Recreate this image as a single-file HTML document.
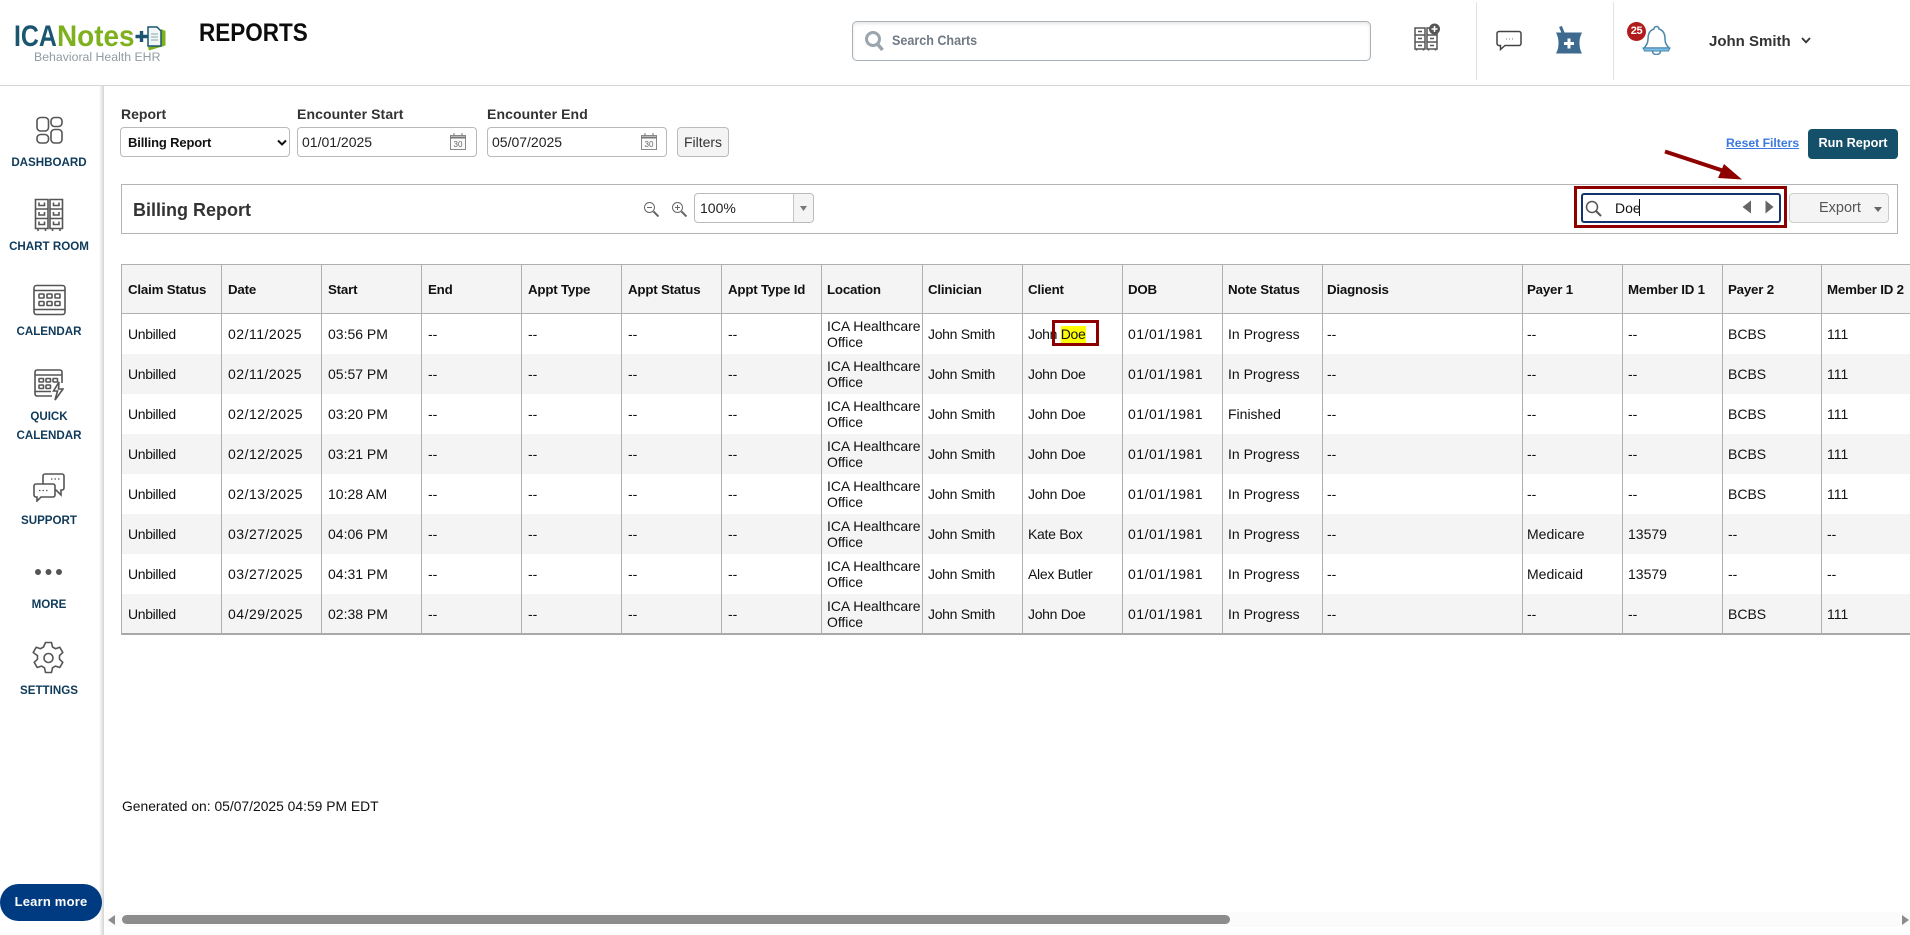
<!DOCTYPE html>
<html lang="en"><head><meta charset="utf-8"><title>Reports</title>
<style>
*{box-sizing:border-box}
html,body{margin:0;padding:0;width:1910px;height:935px;overflow:hidden;background:#fff;font-family:"Liberation Sans",Arial,sans-serif;color:#111}
.a{position:absolute}
.nav{position:absolute;left:0;width:98px;text-align:center;font-size:11.6px;font-weight:700;color:#0f3a5a;line-height:18px;white-space:nowrap}
.lbl{position:absolute;top:105px;font-size:14px;font-weight:700;color:#333;line-height:18px;white-space:nowrap}
.inp{position:absolute;top:127px;height:30px;border:1px solid #b9b9b9;border-radius:4px;background:#fff;font-size:14px;line-height:28px;color:#222}
#wrap{position:absolute;left:121px;top:264px;width:1789px;height:372px;overflow:hidden}
table{position:absolute;left:0;top:0;border-collapse:separate;border-spacing:0;table-layout:fixed;width:1801px;border-top:1px solid #b0b0b0;border-left:1px solid #b0b0b0}
th,td{border-right:1px solid #b0b0b0;padding:0 0 0 6px;overflow:hidden;white-space:nowrap;text-align:left;font-weight:400}
th{height:49px;background:#f4f4f4;font-weight:700;font-size:13.3px;letter-spacing:-.2px;color:#111;border-bottom:1px solid #b0b0b0}
td{height:40px;font-size:14px;color:#111;line-height:16px}
th:nth-child(n+8),td:nth-child(n+8){padding-left:5px}
th:nth-child(13),td:nth-child(13),th:nth-child(14),td:nth-child(14){padding-left:4px}
td.w{letter-spacing:-.05px}
td:nth-child(1){letter-spacing:-.35px}
td:nth-child(2),td:nth-child(11){letter-spacing:.5px}
td:nth-child(9),td:nth-child(10){letter-spacing:-.3px}
tr:nth-child(even) td{background:#f4f4f4}
tbody tr:last-child td{height:41px;border-bottom:2px solid #a8a8a8}
mark{background:#ff0;color:#111;display:inline-block;line-height:17px}
</style></head><body>

<!-- header -->
<div class="a" style="left:0;top:85px;width:1910px;height:1px;background:#d6d6d6"></div>
<div class="a" style="left:14px;top:20px;font-size:30px;font-weight:700;color:#1b5670;line-height:34px;transform:scaleX(.83);transform-origin:left">ICA</div>
<div class="a" style="left:57px;top:20px;font-size:30px;font-weight:700;color:#7fb11f;line-height:34px;transform:scaleX(.93);transform-origin:left">Notes</div>
<svg class="a" style="left:134px;top:24px" width="34" height="28" viewBox="0 0 34 28"><path d="M1.500 12.500h12M7.500 7v11" stroke="#1b5670" stroke-width="3.400" fill="none"/><path d="M15 26.500L31.500 21.500V7L27 5v16L14 23z" fill="#7fb11f"/><path d="M14 3h9l4 4v15H14z" fill="#f2f6f7" stroke="#1b5670" stroke-width="1.500"/><path d="M17 10h7M17 13h7M17 16h7" stroke="#8aa" stroke-width="1"/></svg>
<div class="a" style="left:34px;top:49px;font-size:12.300px;color:#8f9ca2;line-height:16px;white-space:nowrap">Behavioral Health EHR</div>
<div class="a" style="left:199px;top:18px;font-size:25px;font-weight:700;color:#0c0c0c;line-height:30px;transform:scaleX(.9);transform-origin:left">REPORTS</div>

<div class="a" style="left:852px;top:21px;width:519px;height:40px;border:1.500px solid #a9b1b8;border-radius:5px;box-shadow:inset 0 2px 3px #e8e8e8"></div>
<svg class="a" style="left:864px;top:30px" width="21" height="22" viewBox="0 0 21 22"><circle cx="9" cy="9" r="6.500" fill="none" stroke="#9aa5ae" stroke-width="3"/><path d="M13.500 14l5 6" stroke="#9aa5ae" stroke-width="3.400"/></svg>
<div class="a" style="left:892px;top:32px;font-size:13.500px;font-weight:700;color:#6f7a84;line-height:18px;transform:scaleX(.93);transform-origin:left;white-space:nowrap">Search Charts</div>

<svg class="a" style="left:1414px;top:23px" width="27" height="28" viewBox="0 0 27 28" fill="none" stroke="#555" stroke-width="1.500"><path d="M1 5h10v21H1zM13 5h10v21H13zM1 12h10M1 19h10M13 12h10M13 19h10M4 8.500h4M4 15.500h4M4 22.500h4M16 8.500h4M16 15.500h4M16 22.500h4M2.500 26v1.500M9.500 26v1.500M14.500 26v1.500M21.500 26v1.500"/><circle cx="20.500" cy="6" r="5.500" fill="#555" stroke="none"/><path d="M20.500 3v6M17.500 6h6" stroke="#fff" stroke-width="1.600"/></svg>
<div class="a" style="left:1476px;top:2px;width:1px;height:78px;background:#e2e2e2"></div>
<svg class="a" style="left:1496px;top:30px" width="26" height="21" viewBox="0 0 26 21" fill="none"><path d="M3 1.500h20a2 2 0 0 1 2 2v10a2 2 0 0 1-2 2H9l-4.500 4V15.500H3a2 2 0 0 1-2-2v-10a2 2 0 0 1 2-2z" stroke="#444" stroke-width="1.500"/><path d="M10 9h1M13 9h1M16 9h1" stroke="#777" stroke-width="1"/></svg>
<svg class="a" style="left:1556px;top:26px" width="26" height="28" viewBox="0 0 26 28"><path d="M4.500 .5L7.500 8" stroke="#3e6a8f" stroke-width="3"/><path d="M0 6.500H26C24 11 23.500 13 23.500 17c0 4 .7 7 2.500 10.500H0C1.800 24 2.500 21 2.500 17 2.500 13 2 11 0 6.500z" fill="#3e6a8f"/><path d="M13 12.500v10M8 17.500h10" stroke="#fff" stroke-width="3"/></svg>
<div class="a" style="left:1613px;top:2px;width:1px;height:78px;background:#e2e2e2"></div>
<svg class="a" style="left:1642px;top:25px" width="29" height="30" viewBox="0 0 29 30" fill="none"><path d="M14.500 1.500c-1.500 0-2.500 1-2.500 2.500C7 5.500 6 10 6 14c0 4-1.500 6-4 9h25c-2.500-3-4-5-4-9 0-4-1-8.500-6-10 0-1.500-1-2.500-2.500-2.500z" stroke="#4a86ab" stroke-width="1.500" fill="#fff"/><path d="M1 23h27l-1.500 3H2.500z" fill="#7cc0e8" stroke="#4a86ab" stroke-width="1"/><path d="M10.500 26c0 2.500 2 3.500 4 3.500s4-1 4-3.500" stroke="#4a86ab" stroke-width="1.500"/></svg>
<div class="a" style="left:1627px;top:22px;width:19px;height:19px;border-radius:50%;background:#b01c1c;color:#fff;font-size:11px;font-weight:700;line-height:19px;text-align:center;letter-spacing:-.4px">25</div>
<div class="a" style="left:1709px;top:32px;font-size:15px;font-weight:700;color:#333;line-height:20px;white-space:nowrap">John Smith</div>
<svg class="a" style="left:1801px;top:37px" width="10" height="7" viewBox="0 0 10 7"><path d="M1 1l4 4.300L9 1" stroke="#333" stroke-width="1.800" fill="none"/></svg>

<!-- sidebar -->
<div class="a" style="left:99px;top:86px;width:5px;height:849px;background:linear-gradient(90deg,#fff,#d4d4d4)"></div>

<svg class="a" style="left:36px;top:116px" width="27" height="28" viewBox="0 0 27 28" fill="none" stroke="#555" stroke-width="1.600"><rect x="1" y="1.500" width="11.500" height="13.500" rx="3.500"/><rect x="15" y="1.500" width="11" height="9" rx="3.500"/><rect x="1" y="18.500" width="11.500" height="8.500" rx="3.500"/><rect x="15" y="13.500" width="11" height="13.500" rx="3.500"/></svg>
<div class="nav" style="top:154px">DASHBOARD</div>

<svg class="a" style="left:34px;top:198px" width="30" height="34" viewBox="0 0 30 34" fill="none" stroke="#555" stroke-width="1.600"><path d="M1.500 1.500h12.500v29H1.500zM16 1.500h12.500v29H16zM1.500 11h12.500M1.500 20.500h12.500M16 11h12.500M16 20.500h12.500M5 4.500v3h5.500v-3M5 14v3h5.500v-3M5 23.500v3h5.500v-3M19.500 4.500v3h5.500v-3M19.500 14v3h5.500v-3M19.500 23.500v3h5.500v-3M4 30.500v2.500M11.500 30.500v2.500M18.500 30.500v2.500M26 30.500v2.500"/></svg>
<div class="nav" style="top:238px">CHART ROOM</div>

<svg class="a" style="left:33px;top:284px" width="33" height="32" viewBox="0 0 33 32" fill="none" stroke="#555" stroke-width="1.600"><rect x="1" y="1.500" width="31" height="29" rx="2.500"/><path d="M1 6.500h31M1 25.500h31"/><rect x="6" y="10" width="5" height="4" rx=".8"/><rect x="14" y="10" width="5" height="4" rx=".8"/><rect x="22" y="10" width="5" height="4" rx=".8"/><rect x="6" y="17.500" width="5" height="4" rx=".8"/><rect x="14" y="17.500" width="5" height="4" rx=".8"/><rect x="22" y="17.500" width="5" height="4" rx=".8"/></svg>
<div class="nav" style="top:323px">CALENDAR</div>

<svg class="a" style="left:34px;top:369px" width="30" height="32" viewBox="0 0 30 32" fill="none" stroke="#555" stroke-width="1.600"><path d="M18 27H3a2 2 0 0 1-2-2V3a2 2 0 0 1 2-2h23a2 2 0 0 1 2 2v11M1 6h27M1 22.500h16"/><rect x="5" y="9.500" width="4.500" height="3.500" rx=".7"/><rect x="12" y="9.500" width="4.500" height="3.500" rx=".7"/><rect x="19" y="9.500" width="4.500" height="3.500" rx=".7"/><rect x="5" y="16" width="4.500" height="3.500" rx=".7"/><rect x="12" y="16" width="4.500" height="3.500" rx=".7"/><path d="M25 13l-5.500 9h4L21 31l8-11h-4.500z"/></svg>
<div class="nav" style="top:408px;line-height:18.500px">QUICK<br>CALENDAR</div>

<svg class="a" style="left:33px;top:473px" width="32" height="29" viewBox="0 0 32 29" fill="none" stroke="#555" stroke-width="1.600"><path d="M10 11V3a2 2 0 0 1 2-2h17a2 2 0 0 1 2 2v12a2 2 0 0 1-2 2h-1v5l-5-5h-2"/><path d="M3 11h17a2 2 0 0 1 2 2v9a2 2 0 0 1-2 2H8l-4 4v-4H3a2 2 0 0 1-2-2v-9a2 2 0 0 1 2-2z" fill="#fff"/><path d="M18 6h1.500M21.500 6H23M25 6h1.500M6 17.500h1.500M9.500 17.500H11M13 17.500h1.500" stroke-width="1.200"/></svg>
<div class="nav" style="top:512px">SUPPORT</div>

<svg class="a" style="left:34px;top:566px" width="30" height="12" viewBox="0 0 30 12" fill="#555"><circle cx="4" cy="6" r="3"/><circle cx="14.500" cy="6" r="3"/><circle cx="25" cy="6" r="3"/></svg>
<div class="nav" style="top:596px">MORE</div>

<svg class="a" style="left:32px;top:641px" width="33" height="34" viewBox="0 0 33 34" fill="none" stroke="#555" stroke-width="1.600"><path d="M13.500 1.500h6l1 4.500 3 1.700 4.300-1.400 3 5.200-3.300 3.100v3.600l3.300 3.100-3 5.200-4.300-1.400-3 1.700-1 4.700h-6l-1-4.700-3-1.700-4.300 1.400-3-5.200 3.300-3.100v-3.600L1.200 11.500l3-5.200 4.300 1.400 3-1.700z" stroke-linejoin="round"/><circle cx="16.500" cy="17" r="4.500"/></svg>
<div class="nav" style="top:682px">SETTINGS</div>

<div class="a" style="left:0;top:884px;width:102px;height:37px;border-radius:18.500px;background:#003a80;color:#fff;font-size:13px;font-weight:700;line-height:36px;text-align:center;letter-spacing:.2px">Learn more</div>

<!-- filters -->
<div class="lbl" style="left:121px">Report</div>
<div class="lbl" style="left:297px;letter-spacing:.1px">Encounter Start</div>
<div class="lbl" style="left:487px;letter-spacing:.1px">Encounter End</div>
<div class="inp" style="left:120px;width:170px;font-weight:700;padding-left:7px;font-size:13px;letter-spacing:-.15px;color:#111;line-height:29px">Billing Report</div>
<svg class="a" style="left:277px;top:139px" width="10" height="8" viewBox="0 0 10 8"><path d="M1 1.500l4 4 4-4" stroke="#111" stroke-width="2" fill="none"/></svg>
<div class="inp" style="left:297px;width:180px;padding-left:4px">01/01/2025</div>
<div class="inp" style="left:487px;width:180px;padding-left:4px">05/07/2025</div>
<svg class="a" style="left:450px;top:133px" width="16" height="17" viewBox="0 0 16 17"><rect x=".5" y="2.500" width="15" height="14" fill="#fafafa" stroke="#888"/><path d="M0 4.500h16" stroke="#777" stroke-width="2"/><path d="M4 0v3M12 0v3" stroke="#777"/><text x="8" y="14" font-size="8" text-anchor="middle" fill="#666" font-family="Liberation Sans,sans-serif">30</text></svg>
<svg class="a" style="left:641px;top:133px" width="16" height="17" viewBox="0 0 16 17"><rect x=".5" y="2.500" width="15" height="14" fill="#fafafa" stroke="#888"/><path d="M0 4.500h16" stroke="#777" stroke-width="2"/><path d="M4 0v3M12 0v3" stroke="#777"/><text x="8" y="14" font-size="8" text-anchor="middle" fill="#666" font-family="Liberation Sans,sans-serif">30</text></svg>
<div class="inp" style="left:677px;width:52px;background:#f4f4f4;text-align:center;color:#333;border-color:#bbb">Filters</div>

<div class="a" style="left:1726px;top:134px;font-size:12.200px;font-weight:700;color:#3b78e0;text-decoration:underline;line-height:18px;white-space:nowrap">Reset Filters</div>
<div class="a" style="left:1808px;top:129px;width:90px;height:30px;background:#14506a;border-radius:4px;color:#fff;font-size:12.700px;font-weight:700;line-height:29px;text-align:center">Run Report</div>

<!-- toolbar -->
<div class="a" style="left:121px;top:184px;width:1777px;height:50px;border:1.500px solid #b4b4b4"></div>
<div class="a" style="left:133px;top:199px;font-size:18px;font-weight:700;color:#333;line-height:22px;white-space:nowrap">Billing Report</div>
<svg class="a" style="left:643px;top:201px" width="16" height="16" viewBox="0 0 16 16" fill="none" stroke="#666"><circle cx="6.500" cy="6.500" r="5"/><path d="M10.500 10.500l5 5" stroke-width="2"/><path d="M4 6.500h5"/></svg>
<svg class="a" style="left:671px;top:201px" width="16" height="16" viewBox="0 0 16 16" fill="none" stroke="#666"><circle cx="6.500" cy="6.500" r="5"/><path d="M10.500 10.500l5 5" stroke-width="2"/><path d="M4 6.500h5M6.500 4v5"/></svg>
<div class="inp" style="left:694px;top:193px;width:120px;padding-left:5px;border-color:#bbb">100%</div>
<div class="a" style="left:793px;top:194px;width:20px;height:28px;background:#f4f4f4;border-left:1px solid #c4c4c4;border-radius:0 3px 3px 0"></div>
<svg class="a" style="left:800px;top:206px" width="7" height="5" viewBox="0 0 7 5"><path d="M0 0h7L3.500 5z" fill="#777"/></svg>

<div class="a" style="left:1574px;top:186px;width:213px;height:42px;border:3px solid #8e0000;background:#fff"></div>
<div class="a" style="left:1581px;top:193px;width:200px;height:30px;border:2px solid #14346e;border-radius:3px;background:#fff"></div>
<svg class="a" style="left:1585px;top:200px" width="17" height="17" viewBox="0 0 17 17" fill="none" stroke="#555"><circle cx="7" cy="7" r="5.500" stroke-width="1.500"/><path d="M11 11l5 5" stroke-width="2"/></svg>
<div class="a" style="left:1615px;top:199px;font-size:14px;color:#111;line-height:18px">Doe</div>
<div class="a" style="left:1639px;top:199px;width:1px;height:17px;background:#111"></div>
<svg class="a" style="left:1742px;top:200px" width="32" height="14" viewBox="0 0 32 14" fill="#666"><path d="M9 .5v13L.5 7zM23.500 .5v13L31.500 7z"/></svg>
<div class="a" style="left:1789px;top:193px;width:100px;height:30px;background:#f4f4f4;border:1px solid #ccc;border-radius:4px;color:#555;font-size:14.500px;line-height:28px;padding-left:29px">Export</div>
<svg class="a" style="left:1874px;top:207px" width="8" height="5" viewBox="0 0 8 5"><path d="M0 0h8L4 5z" fill="#666"/></svg>

<!-- table -->
<div id="wrap"><table>
<colgroup><col style="width:100px"><col style="width:100px"><col style="width:100px"><col style="width:100px"><col style="width:100px"><col style="width:100px"><col style="width:100px"><col style="width:101px"><col style="width:100px"><col style="width:100px"><col style="width:100px"><col style="width:100px"><col style="width:200px"><col style="width:100px"><col style="width:100px"><col style="width:99px"><col style="width:100px"></colgroup>
<thead><tr><th>Claim Status</th><th>Date</th><th>Start</th><th>End</th><th>Appt Type</th><th>Appt Status</th><th>Appt Type Id</th><th>Location</th><th>Clinician</th><th>Client</th><th>DOB</th><th>Note Status</th><th>Diagnosis</th><th>Payer 1</th><th>Member ID 1</th><th>Payer 2</th><th>Member ID 2</th></tr></thead>
<tbody>
<tr><td>Unbilled</td><td>02/11/2025</td><td>03:56 PM</td><td>--</td><td>--</td><td>--</td><td>--</td><td class="w">ICA Healthcare<br>Office</td><td>John Smith</td><td>John <mark>Doe</mark></td><td>01/01/1981</td><td>In Progress</td><td>--</td><td>--</td><td>--</td><td>BCBS</td><td>111</td></tr>
<tr><td>Unbilled</td><td>02/11/2025</td><td>05:57 PM</td><td>--</td><td>--</td><td>--</td><td>--</td><td class="w">ICA Healthcare<br>Office</td><td>John Smith</td><td>John Doe</td><td>01/01/1981</td><td>In Progress</td><td>--</td><td>--</td><td>--</td><td>BCBS</td><td>111</td></tr>
<tr><td>Unbilled</td><td>02/12/2025</td><td>03:20 PM</td><td>--</td><td>--</td><td>--</td><td>--</td><td class="w">ICA Healthcare<br>Office</td><td>John Smith</td><td>John Doe</td><td>01/01/1981</td><td>Finished</td><td>--</td><td>--</td><td>--</td><td>BCBS</td><td>111</td></tr>
<tr><td>Unbilled</td><td>02/12/2025</td><td>03:21 PM</td><td>--</td><td>--</td><td>--</td><td>--</td><td class="w">ICA Healthcare<br>Office</td><td>John Smith</td><td>John Doe</td><td>01/01/1981</td><td>In Progress</td><td>--</td><td>--</td><td>--</td><td>BCBS</td><td>111</td></tr>
<tr><td>Unbilled</td><td>02/13/2025</td><td>10:28 AM</td><td>--</td><td>--</td><td>--</td><td>--</td><td class="w">ICA Healthcare<br>Office</td><td>John Smith</td><td>John Doe</td><td>01/01/1981</td><td>In Progress</td><td>--</td><td>--</td><td>--</td><td>BCBS</td><td>111</td></tr>
<tr><td>Unbilled</td><td>03/27/2025</td><td>04:06 PM</td><td>--</td><td>--</td><td>--</td><td>--</td><td class="w">ICA Healthcare<br>Office</td><td>John Smith</td><td>Kate Box</td><td>01/01/1981</td><td>In Progress</td><td>--</td><td>Medicare</td><td>13579</td><td>--</td><td>--</td></tr>
<tr><td>Unbilled</td><td>03/27/2025</td><td>04:31 PM</td><td>--</td><td>--</td><td>--</td><td>--</td><td class="w">ICA Healthcare<br>Office</td><td>John Smith</td><td>Alex Butler</td><td>01/01/1981</td><td>In Progress</td><td>--</td><td>Medicaid</td><td>13579</td><td>--</td><td>--</td></tr>
<tr><td>Unbilled</td><td>04/29/2025</td><td>02:38 PM</td><td>--</td><td>--</td><td>--</td><td>--</td><td class="w">ICA Healthcare<br>Office</td><td>John Smith</td><td>John Doe</td><td>01/01/1981</td><td>In Progress</td><td>--</td><td>--</td><td>--</td><td>BCBS</td><td>111</td></tr>
</tbody></table></div>

<!-- annotations -->
<div class="a" style="left:1052px;top:320px;width:47px;height:26px;border:3px solid #8e0000"></div>
<svg class="a" style="left:1660px;top:148px" width="85" height="34" viewBox="0 0 85 34"><path d="M5 3.500L64 23" stroke="#8e0000" stroke-width="4" fill="none"/><path d="M82 31.500L58 30l6-14z" fill="#8e0000"/></svg>

<div class="a" style="left:122px;top:797px;font-size:13.860px;color:#111;line-height:18px;white-space:nowrap">Generated on: 05/07/2025 04:59 PM EDT</div>

<!-- scrollbar -->
<div class="a" style="left:105px;top:912px;width:1805px;height:15px;background:#fbfbfb"></div>
<div class="a" style="left:122px;top:915px;width:1108px;height:9px;background:#8c8c8c;border-radius:4.500px"></div>
<svg class="a" style="left:108px;top:915px" width="8" height="10" viewBox="0 0 8 10"><path d="M7 0v10L0 5z" fill="#8c8c8c"/></svg>
<svg class="a" style="left:1902px;top:915px" width="7" height="10" viewBox="0 0 7 10"><path d="M0 0v10l7-5z" fill="#8c8c8c"/></svg>
</body></html>
